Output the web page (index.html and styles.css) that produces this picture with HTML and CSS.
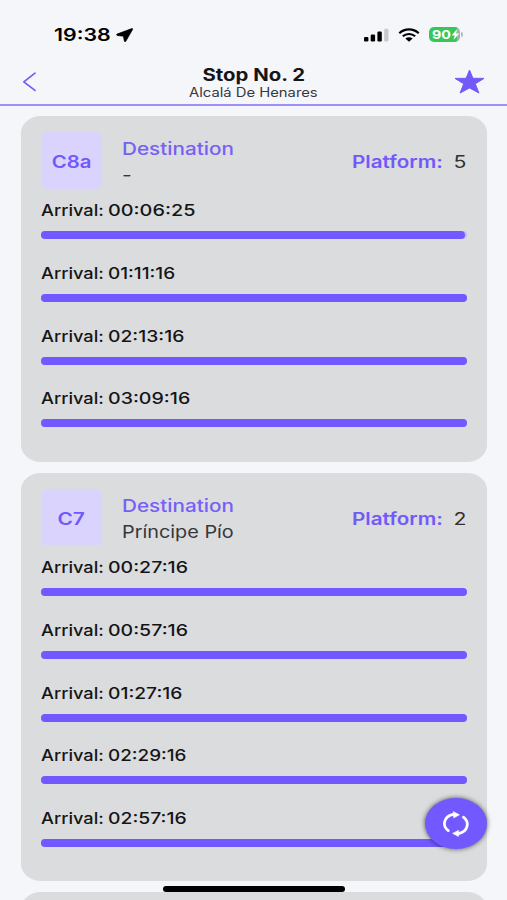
FILE: index.html
```html
<!DOCTYPE html>
<html lang="en">
<head>
<meta charset="utf-8">
<title>Stop No. 2</title>
<link rel="stylesheet" href="styles.css">
</head>
<body>
<div class="screen">
  <header class="header">
    <div class="status">
      <div class="status-left">
        <span class="box clock"><span class="fit" data-w="56.5">19:38</span></span>
        <svg class="location" width="18" height="15" viewBox="0 0 18 15"><path d="M15.8 .6 1 6.1Q0 7.1 1.2 7.5L7.4 8.2 8.4 13.2Q9 14.3 9.8 13.3L16.6 1.4Q16.8.4 15.8.6Z" stroke="#000" stroke-width=".7" stroke-linejoin="round"/></svg>
      </div>
      <div class="status-right">
        <svg width="25" height="14" viewBox="0 0 25 14"><rect x="0" y="9" width="4.4" height="4.5" rx="1.2"/><rect x="6.7" y="6.5" width="4.4" height="7" rx="1.2"/><rect x="13.4" y="3.5" width="4.4" height="10" rx="1.2"/><rect x="20.2" y=".7" width="4.2" height="12.8" rx="1.2" fill="#c8c9cb"/></svg>
        <svg width="22" height="14" viewBox="0 0 22 14" fill="none" stroke="#000" stroke-width="2.2"><path d="M1.3 5.2C6.7.1 15.3.1 20.7 5.2M4.8 8.3c3.5-3.1 8.9-3.1 12.4 0"/><path d="M7.3 10.6c2.1-1.7 5.3-1.7 7.4 0L11 13.7Z" fill="#000" stroke="none"/></svg>
        <div class="battery">
          <span class="fit battery-level" data-w="19">90</span>
          <svg width="7" height="11" viewBox="0 0 7 11"><path d="M4.7.7 0 6.2h2.8L2 10.3 6.9 4.7H4Z" fill="#fff" stroke="#fff" stroke-width=".4"/></svg>
        </div>
        <i class="battery-tip"></i>
      </div>
    </div>
    <div class="nav">
      <svg class="back" width="16" height="20" viewBox="0 0 16 20"><path d="M13 1.2 1.8 9.8 13 18.4" fill="none" stroke="#705bfa" stroke-width="1.7" stroke-linecap="round" stroke-linejoin="round"/></svg>
      <div class="titles">
        <h1 class="title"><span class="fit center" data-w="103">Stop No. 2</span></h1>
        <p class="subtitle"><span class="fit center" data-w="129">Alcalá De Henares</span></p>
      </div>
      <svg class="star" width="31" height="26" viewBox="0 0 31 26"><path d="M15.5 1 18.9 9.3 30 9.4 21.3 14.8 24.9 24 15.5 18.9 6.1 24 9.7 14.8 1 9.4 12.1 9.3Z" fill="#7259fa" stroke="#7259fa" stroke-linejoin="round"/></svg>
    </div>
  </header>

  <main class="stops">
    <section class="card">
      <div class="card-head">
        <div class="line"><span class="fit center" data-w="39.5">C8a</span></div>
        <div class="destination"><div class="label"><span class="fit" data-w="112">Destination</span></div><div class="value"><span class="fit" data-w="10">-</span></div></div>
        <div class="platform"><span class="box platform-label"><span class="fit" data-w="91">Platform:</span></span><span class="box platform-number"><span class="fit end" data-w="12.5">5</span></span></div>
      </div>
      <div class="arrival"><p><span class="box arrival-label"><span class="fit" data-w="62.5">Arrival:</span></span><span class="fit" data-w="88">00:06:25</span></p><div class="track"><div class="bar bar-current"></div></div></div>
      <div class="arrival"><p><span class="box arrival-label"><span class="fit" data-w="62.5">Arrival:</span></span><span class="fit" data-w="67.5">01:11:16</span></p><div class="track"><div class="bar"></div></div></div>
      <div class="arrival"><p><span class="box arrival-label"><span class="fit" data-w="62.5">Arrival:</span></span><span class="fit" data-w="76">02:13:16</span></p><div class="track"><div class="bar"></div></div></div>
      <div class="arrival"><p><span class="box arrival-label"><span class="fit" data-w="62.5">Arrival:</span></span><span class="fit" data-w="82">03:09:16</span></p><div class="track"><div class="bar"></div></div></div>
    </section>

    <section class="card">
      <div class="card-head">
        <div class="line"><span class="fit center" data-w="27">C7</span></div>
        <div class="destination"><div class="label"><span class="fit" data-w="112">Destination</span></div><div class="value"><span class="fit" data-w="112">Príncipe Pío</span></div></div>
        <div class="platform"><span class="box platform-label"><span class="fit" data-w="91">Platform:</span></span><span class="box platform-number"><span class="fit end" data-w="12.5">2</span></span></div>
      </div>
      <div class="arrival"><p><span class="box arrival-label"><span class="fit" data-w="62.5">Arrival:</span></span><span class="fit" data-w="80.5">00:27:16</span></p><div class="track"><div class="bar"></div></div></div>
      <div class="arrival"><p><span class="box arrival-label"><span class="fit" data-w="62.5">Arrival:</span></span><span class="fit" data-w="80.5">00:57:16</span></p><div class="track"><div class="bar"></div></div></div>
      <div class="arrival"><p><span class="box arrival-label"><span class="fit" data-w="62.5">Arrival:</span></span><span class="fit" data-w="74.5">01:27:16</span></p><div class="track"><div class="bar"></div></div></div>
      <div class="arrival"><p><span class="box arrival-label"><span class="fit" data-w="62.5">Arrival:</span></span><span class="fit" data-w="79">02:29:16</span></p><div class="track"><div class="bar"></div></div></div>
      <div class="arrival"><p><span class="box arrival-label"><span class="fit" data-w="62.5">Arrival:</span></span><span class="fit" data-w="78.5">02:57:16</span></p><div class="track"><div class="bar"></div></div></div>
    </section>

    <section class="card card-next"></section>
  </main>

  <div class="refresh">
    <svg width="28" height="26" viewBox="0 0 28 26" fill="none" stroke="#fff" stroke-width="2.7" stroke-linecap="round"><path d="M6.3 19.6C.2 15.2 1 5.4 11.5 3.4"/><path d="M21.4 6.2c6.3 4.7 5 14.4-4.9 16.4"/><path d="M11.5.7 17.3 3.8 12 6.7ZM16.3 19.5 10.7 22.4 16.3 25.3Z" fill="#fff" stroke-width=".7" stroke-linejoin="round"/></svg>
  </div>
  <div class="home-indicator"></div>
</div>
<script src="fit.js"></script>
</body>
</html>
```
FILE: styles.css
```css
* { box-sizing: border-box; margin: 0; padding: 0; }
body { font-family: Inter, "Liberation Sans", sans-serif; background: #f4f6f8; color: #151517; }
svg { display: block; flex: none; }
.screen { position: relative; height: 900px; overflow: hidden; background: #f4f6f9; }
.fit { display: inline-block; white-space: nowrap; transform-origin: left center; }
.fit.center { transform-origin: center; }
.fit.end { transform-origin: right center; }
.box { display: block; flex: none; }

.header { height: 105.5px; border-bottom: 2px solid #9d90fa; }
.status { height: 58px; padding: 24px 44px 0 53.5px; display: flex; justify-content: space-between; align-items: flex-start; }
.status-left { display: flex; }
.clock { width: 62px; padding-top: 1px; font-size: 17px; line-height: 21px; font-weight: 600; color: #000; }
.location { margin-top: 4px; }
.status-right { display: flex; align-items: center; height: 21px; gap: 9px; }
.battery { display: flex; align-items: center; width: 31px; height: 15px; padding-left: 3px; border-radius: 5px; background: linear-gradient(90deg, #35c759 90%, #a7b2aa 90%); }
.battery-level { width: auto; font-size: 12px; line-height: 15px; font-weight: 700; color: #fff; }
.battery svg { margin-left: 4px; }
.battery-tip { width: 2px; height: 5px; margin-left: -8px; border-radius: 0 2px 2px 0; background: #b7b9bc; }
.nav { height: 46px; display: flex; padding: 0 22.5px 0 22px; justify-content: space-between; }
.back { margin-top: 14px; }
.titles { margin-top: 7px; width: 160px; margin-left: 16px; text-align: center; }
.title { font-size: 17px; line-height: 20px; font-weight: 700; }
.subtitle { font-size: 12.5px; line-height: 16px; color: #37383b; }
.star { margin-top: 11px; }

.stops { display: flex; flex-direction: column; gap: 11px; padding: 10px 20.5px 0 21px; }
.card { border-radius: 20px / 17px; background: #dbdcde; padding: 16.5px 20px 21.5px; }
.card-next { height: 40px; }
.card-head { height: 57px; display: flex; align-items: center; }
.line { width: 61px; height: 57px; border-radius: 6px; background: #dad3fe; color: #7259fa; font-size: 17px; line-height: 60px; font-weight: 600; text-align: center; }
.destination { flex: 1; padding: 3px 0 0 19.5px; font-size: 17px; line-height: 26px; }
.label { color: #7660f6; font-weight: 500; }
.value { color: #36373a; }
.platform { display: flex; font-size: 17px; line-height: 22px; padding-top: 3px; }
.platform-label { width: 91px; color: #7259fa; font-weight: 600; }
.platform-number { width: 24px; text-align: right; color: #303134; }
.arrival { height: 62.75px; padding-top: 11px; font-size: 16px; line-height: 20px; font-weight: 500; }
.arrival p { display: flex; }
.arrival-label { width: 66.5px; }
.track { height: 8px; margin-top: 11px; border-radius: 4px; background: #c4bdf5; }
.bar { height: 8px; border-radius: 4px; background: #7259ff; }
.bar-current { width: 99.7%; }

.refresh { position: absolute; left: 425px; top: 798px; width: 62px; height: 51px; border-radius: 50%; background: #7259ff; box-shadow: 0 0 5px rgba(0, 0, 0, .65); display: flex; align-items: center; justify-content: center; }
.home-indicator { position: absolute; left: 163px; top: 886px; width: 182px; height: 6px; border-radius: 3px; background: #000; }
```
FILE: fit.js
```js
// Stretch each label to its design width.
document.querySelectorAll('.fit').forEach(function (el) {
  el.style.transform = 'scaleX(' + Number(el.dataset.w) / el.offsetWidth + ')';
});
```
